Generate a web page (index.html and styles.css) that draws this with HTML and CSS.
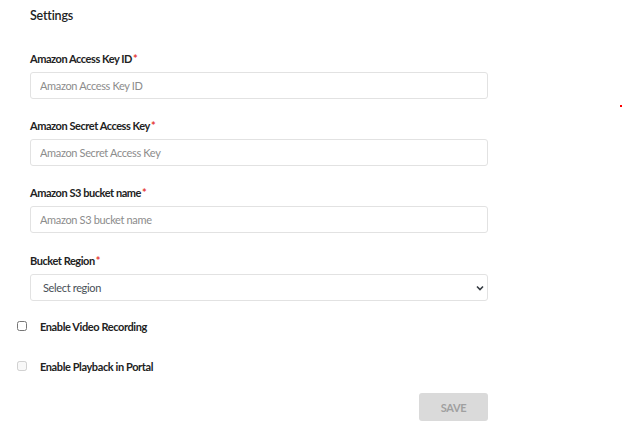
FILE: index.html
```html
<!DOCTYPE html>
<html lang="en">
<head>
    <meta charset="UTF-8">
    <title>Settings</title>
    <link rel="stylesheet" href="styles.css">
</head>
<body>
    <div class="page">
        <h3 class="title">Settings</h3>

        <div class="field">
            <label for="accessKey">Amazon Access Key ID<span class="req">*</span></label>
            <input type="text" id="accessKey" placeholder="Amazon Access Key ID">
        </div>

        <div class="field">
            <label for="secretKey">Amazon Secret Access Key<span class="req">*</span></label>
            <input type="text" id="secretKey" placeholder="Amazon Secret Access Key">
        </div>

        <div class="field">
            <label for="bucket">Amazon S3 bucket name<span class="req">*</span></label>
            <input type="text" id="bucket" placeholder="Amazon S3 bucket name">
        </div>

        <div class="field field-region">
            <label for="region">Bucket Region<span class="req">*</span></label>
            <div class="select-wrap">
                <select id="region">
                    <option>Select region</option>
                </select>
                <svg class="chevron" width="8" height="6" viewBox="0 0 8 6">
                    <path d="M1 1.5 L4 4.5 L7 1.5" fill="none" stroke="#343a40" stroke-width="1.6"/>
                </svg>
            </div>
        </div>

        <div class="options">
            <div class="check-row">
                <input type="checkbox" id="recording">
                <label for="recording">Enable Video Recording</label>
            </div>
            <div class="check-row">
                <input type="checkbox" id="playback" disabled>
                <label for="playback">Enable Playback in Portal</label>
            </div>
        </div>

        <div class="actions">
            <button class="btn-save" disabled>SAVE</button>
        </div>
    </div>
    <span class="dot"></span>
</body>
</html>
```

FILE: styles.css
```css
body {
    margin: 0;
    font-family: "Lato", "Open Sans", sans-serif;
    background-color: #fff;
    color: #212529;
}
.page {
    width: 458px;
    padding: 7px 0 0 30px;
}
.title {
    margin: 0 0 25px 0;
    font-size: 12.5px;
    font-weight: 600;
    line-height: 18px;
    letter-spacing: -0.2px;
    color: #222;
}
.field {
    margin-bottom: 18px;
}
.field label {
    display: block;
    font-size: 11px;
    font-weight: 700;
    line-height: 16px;
    letter-spacing: -0.45px;
    padding-top: 1px;
    margin-bottom: 5px;
    color: #222;
}
.field-region {
    padding-top: 1px;
    margin-bottom: 17px;
}
.req {
    margin-left: 1px;
    color: #e53935;
}
.field input,
.field select {
    box-sizing: border-box;
    width: 100%;
    height: 27px;
    border: 1px solid #e2e2e2;
    border-radius: 3px;
    padding: 0 9px;
    font-family: inherit;
    font-size: 11px;
    letter-spacing: -0.35px;
    color: #333;
    background: #fff;
    outline: none;
}
.field input::placeholder {
    color: #8c8c8c;
}
.select-wrap {
    position: relative;
}
.field select {
    appearance: none;
    padding-left: 12px;
    color: #495057;
}
.chevron {
    position: absolute;
    right: 4px;
    top: 11px;
}
.options {
    display: flex;
    flex-direction: column;
    gap: 24px;
    margin-left: -13px;
    margin-bottom: 19px;
}
.check-row {
    display: flex;
    align-items: center;
    height: 16px;
}
.check-row input {
    margin: 0 13px 0 0;
    width: 10px;
    height: 10px;
}
.check-row label {
    font-size: 11px;
    font-weight: 700;
    letter-spacing: -0.4px;
    color: #222;
}
.actions {
    display: flex;
    justify-content: flex-end;
}
.btn-save {
    width: 69px;
    height: 28px;
    border: none;
    border-radius: 3px;
    background-color: #dadada;
    color: #a0a0a0;
    font-family: inherit;
    font-size: 11px;
    font-weight: 700;
    letter-spacing: -0.3px;
}
.dot {
    position: absolute;
    left: 620px;
    top: 105px;
    width: 2px;
    height: 2px;
    background: #f00;
}
```
